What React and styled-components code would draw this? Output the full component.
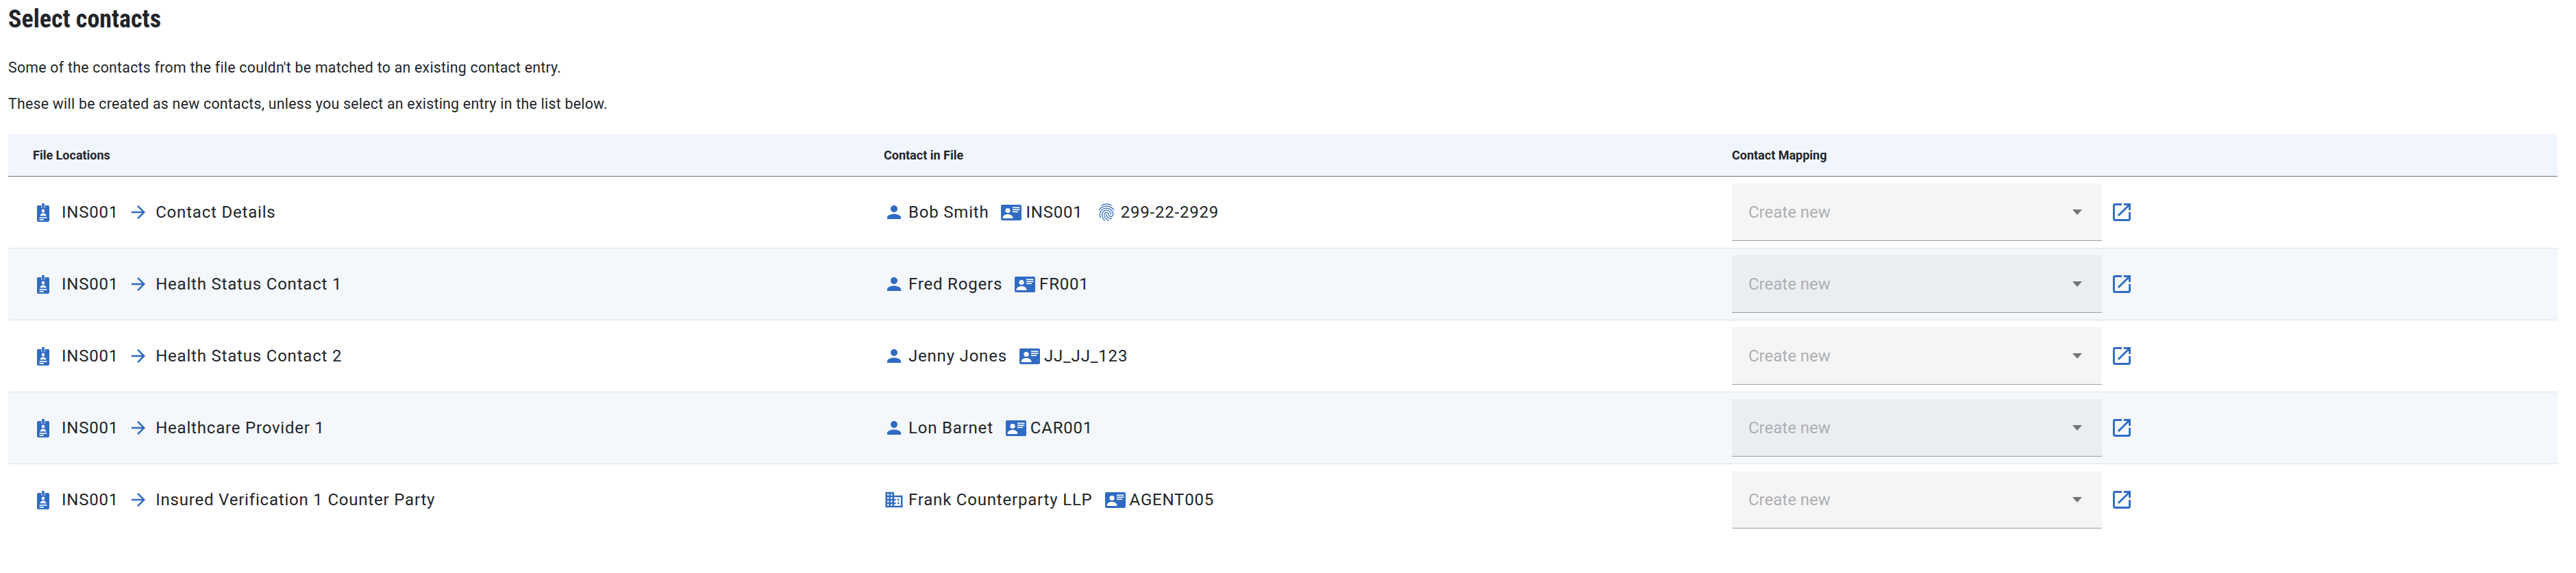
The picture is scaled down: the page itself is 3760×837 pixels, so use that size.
import React from 'react';
import styled, { createGlobalStyle } from 'styled-components';
import { MdPerson, MdFingerprint, MdDomain, MdArrowForward } from 'react-icons/md';

const blue = '#2f6bc4';

const GlobalStyle = createGlobalStyle`
  html, body { margin: 0; background: #fff; }
  body { font-family: Roboto, "Liberation Sans", sans-serif; color: #212529; }
`;

const rows = [
  { location: 'Contact Details', name: 'Bob Smith', code: 'INS001', ssn: '299-22-2929' },
  { location: 'Health Status Contact 1', name: 'Fred Rogers', code: 'FR001' },
  { location: 'Health Status Contact 2', name: 'Jenny Jones', code: 'JJ_JJ_123' },
  { location: 'Healthcare Provider 1', name: 'Lon Barnet', code: 'CAR001' },
  { location: 'Insured Verification 1 Counter Party', name: 'Frank Counterparty LLP', code: 'AGENT005', company: true },
];

function BadgeIcon() {
  return (
    <svg width="18" height="27" viewBox="0 0 20 28" preserveAspectRatio="none">
      <rect x="8" y="0" width="4" height="7" fill={blue} />
      <path fill={blue} d="M2 3h5v4h6V3h5a2 2 0 0 1 2 2v21a2 2 0 0 1-2 2H2a2 2 0 0 1-2-2V5a2 2 0 0 1 2-2z" />
      <circle cx="10" cy="11.5" r="2.6" fill="#fff" />
      <path fill="#fff" d="M5 19c0-2.5 2.5-4 5-4s5 1.500 5 4z" />
      <rect x="4" y="21" width="12" height="1.600" fill="#fff" />
      <rect x="4" y="24" width="7" height="1.600" fill="#fff" />
    </svg>
  );
}

function IdCardIcon() {
  return (
    <svg width="30" height="23" viewBox="0 0 30 23">
      <rect width="30" height="23" rx="2" fill={blue} />
      <circle cx="10" cy="8.500" r="3.600" fill="#fff" />
      <path fill="#fff" d="M2.500 20c0-4 3.500-6 7.500-6s7.500 2 7.500 6z" />
      <rect x="17" y="3.500" width="10.500" height="1.600" fill="#fff" />
      <rect x="17" y="6.500" width="10.500" height="1.600" fill="#fff" />
      <rect x="17" y="9.500" width="8" height="1.600" fill="#fff" />
    </svg>
  );
}

function OpenIcon() {
  return (
    <svg width="26" height="26" viewBox="3 3 18 18" fill={blue}>
      <path d="M19 19H5V5h7V3H5c-1.110 0-2 .9-2 2v14c0 1.100.89 2 2 2h14c1.100 0 2-.9 2-2v-7h-2v7zM14 3v2h3.590l-9.830 9.830 1.410 1.410L19 6.410V10h2V3h-7z" />
    </svg>
  );
}

function Row({ row, shaded }) {
  return (
    <TableRow $shaded={shaded}>
      <Cell>
        <IconSlot $gap={12}><BadgeIcon /></IconSlot>
        <RowText>INS001</RowText>
        <ArrowSlot><MdArrowForward size={30} color={blue} /></ArrowSlot>
        <RowText>{row.location}</RowText>
      </Cell>
      <Cell>
        <IconSlot $gap={6}>{row.company ? <MdDomain size={30} color={blue} /> : <MdPerson size={30} color={blue} />}</IconSlot>
        <RowText>{row.name}</RowText>
        <CardSlot><IdCardIcon /></CardSlot>
        <RowText>{row.code}</RowText>
        {row.ssn && (
          <>
            <PrintSlot><MdFingerprint size={30} color={blue} /></PrintSlot>
            <RowText>{row.ssn}</RowText>
          </>
        )}
      </Cell>
      <MappingCell>
        <Select $shaded={shaded}>
          <Placeholder>Create new</Placeholder>
          <Caret />
        </Select>
        <OpenButton><OpenIcon /></OpenButton>
      </MappingCell>
    </TableRow>
  );
}

export default function App() {
  return (
    <Page>
      <GlobalStyle />
      <Title>Select contacts</Title>
      <Intro>Some of the contacts from the file couldn't be matched to an existing contact entry.</Intro>
      <Intro>These will be created as new contacts, unless you select an existing entry in the list below.</Intro>
      <Table>
        <HeaderRow>
          <HeaderCell>File Locations</HeaderCell>
          <HeaderCell>Contact in File</HeaderCell>
          <HeaderCell>Contact Mapping</HeaderCell>
        </HeaderRow>
        {rows.map((row, i) => (
          <Row key={row.name} row={row} shaded={i % 2 === 1} />
        ))}
      </Table>
    </Page>
  );
}

const Page = styled.div`
  padding: 0 27px 0 12px;
  height: 837px;
  box-sizing: border-box;
  overflow: hidden;
`;

const Title = styled.h1`
  margin: 0;
  height: 72px;
  font-size: 36px;
  line-height: 57px;
  font-weight: 700;
  font-stretch: 87%;
`;

const Intro = styled.p`
  margin: 0;
  height: 53px;
  font-size: 21.3px;
  line-height: 53px;
  letter-spacing: 0.26px;
`;

const Table = styled.div`
  margin-top: 18px;
`;

const grid = `
  display: grid;
  grid-template-columns: 1242px 1238px 1fr;
  align-items: center;
`;

const HeaderRow = styled.div`
  ${grid}
  height: 61px;
  background: #f1f6fe;
  border-bottom: 1px solid #6c757d;
`;

const HeaderCell = styled.div`
  padding-left: 36px;
  font-size: 18px;
  font-weight: 700;
  color: #212529;
`;

const TableRow = styled.div`
  ${grid}
  height: 104px;
  background: ${(p) => (p.$shaded ? '#f4f7fb' : '#fff')};
  border-bottom: 1px solid #dee2e6;
  &:last-child { border-bottom: none; }
`;

const Cell = styled.div`
  display: flex;
  align-items: center;
  padding-left: 36px;
`;

const MappingCell = styled(Cell)`
  padding-left: 36px;
  height: 100%;
`;

const IconSlot = styled.span`
  display: flex;
  justify-content: center;
  width: 30px;
  margin-right: ${(p) => p.$gap}px;
`;

const ArrowSlot = styled.span`
  display: flex;
  margin: 0 10px 0 14px;
`;

const CardSlot = styled.span`
  display: flex;
  margin: 0 6px 0 18px;
`;

const PrintSlot = styled.span`
  display: flex;
  margin: 0 6px 0 19px;
`;

const RowText = styled.span`
  font-size: 24px;
  letter-spacing: 0.8px;
  color: #212529;
  white-space: nowrap;
`;

const Select = styled.div`
  box-sizing: border-box;
  width: 540px;
  height: 84px;
  padding: 0 29px 0 24px;
  display: flex;
  align-items: center;
  justify-content: space-between;
  background: ${(p) => (p.$shaded ? '#ebeef1' : '#f5f5f5')};
  border-bottom: 1px solid #9e9e9e;
`;

const Placeholder = styled.span`
  font-size: 24px;
  color: #adb0b2;
`;

const Caret = styled.span`
  width: 0;
  height: 0;
  border-left: 7.5px solid transparent;
  border-right: 7.5px solid transparent;
  border-top: 8px solid #757575;
`;

const OpenButton = styled.span`
  display: flex;
  margin-left: 16px;
`;
